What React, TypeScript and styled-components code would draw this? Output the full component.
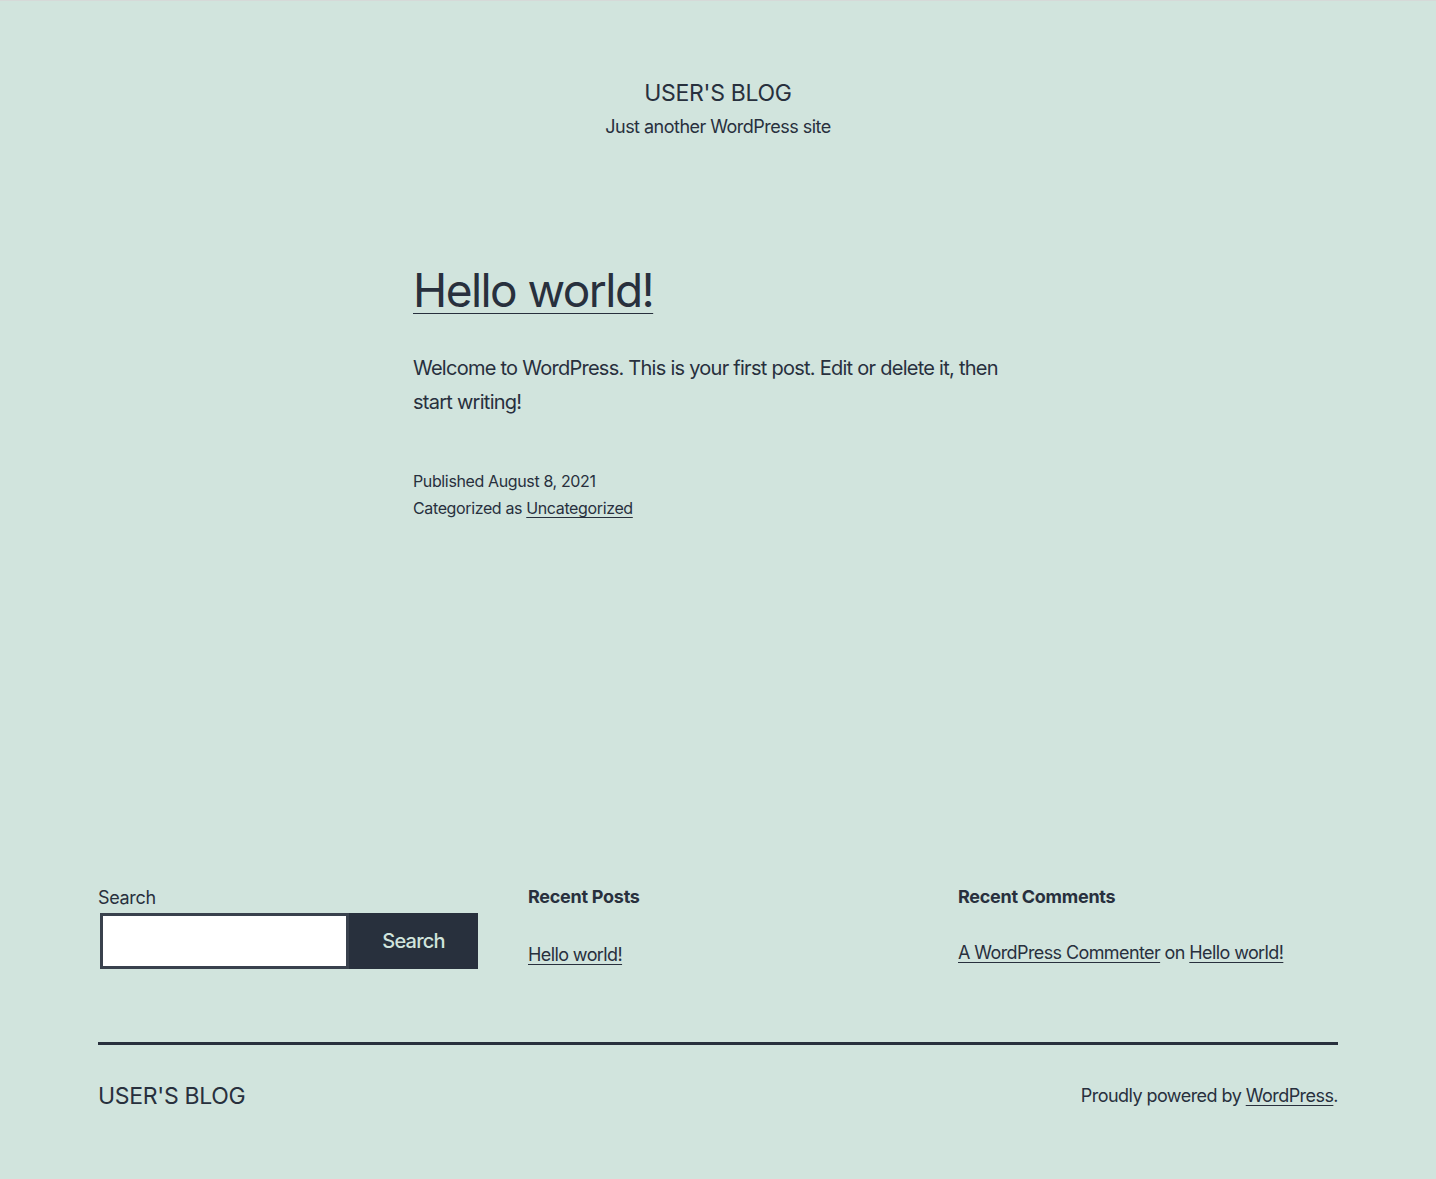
import React from "react";
import styled, { createGlobalStyle } from "styled-components";

const Global = createGlobalStyle`
  html, body { margin: 0; padding: 0; background: #d1e4dd; }
  body {
    font-family: Inter, "Noto Sans", "Liberation Sans", sans-serif;
    color: #28303d;
    -webkit-font-smoothing: antialiased;
  }
  * { box-sizing: border-box; }
`;

const Page = styled.div`
  min-height: 1179px;
  border-top: 1px solid #d6d9d8;
  display: flex;
  flex-direction: column;
`;

const Header = styled.header`
  padding-top: 76px;
  display: flex;
  flex-direction: column;
  align-items: center;
`;

const SiteTitle = styled.p`
  margin: 0;
  font-size: 23px;
  line-height: 33px;
  letter-spacing: -0.3px;
`;

const Tagline = styled.p`
  margin: 0;
  font-size: 18px;
  line-height: 25px;
  letter-spacing: -0.52px;
  margin-top: 4px;
`;

const Main = styled.main`
  width: 610px;
  margin: 0 auto;
  padding-top: 120px;
`;

const EntryTitle = styled.h2`
  margin: 0;
  font-size: 46px;
  font-weight: 400;
  line-height: 62px;
  letter-spacing: -1.55px;
`;

const Link = styled.a<{ $thick?: boolean }>`
  color: #28303d;
  text-decoration: underline;
  text-decoration-thickness: 1px;
  text-underline-offset: ${(p) => (p.$thick ? "6px" : "3px")};
`;

const Content = styled.p`
  margin: 30px 0 0;
  font-size: 20px;
  line-height: 34px;
  letter-spacing: -0.74px;
`;

const Meta = styled.div`
  margin-top: 49px;
  font-size: 16px;
  line-height: 27px;
  letter-spacing: -0.37px;
`;

const MetaLine = styled.div``;

const Widgets = styled.aside`
  width: 1240px;
  margin: 360px auto 0;
  display: grid;
  grid-template-columns: repeat(3, minmax(0, 1fr));
  column-gap: 50px;
`;

const Widget = styled.section`
  display: flex;
  flex-direction: column;
`;

const SearchLabel = styled.label`
  font-size: 18px;
  line-height: 26px;
  letter-spacing: -0.33px;
  margin-top: 3px;
`;

const SearchRow = styled.div`
  display: flex;
  margin-top: 2px;
  margin-left: 2px;
`;

const SearchInput = styled.input`
  flex: 1 1 auto;
  height: 56px;
  border: 3px solid #39414d;
  background: #fff;
  font-size: 18px;
  padding: 0 12px;
  outline: none;
  min-width: 0;
`;

const SearchButton = styled.button`
  flex: 0 0 129px;
  width: 129px;
  height: 56px;
  border: 0;
  padding: 0;
  background: #28303d;
  color: #d1e4dd;
  font-family: inherit;
  font-size: 20px;
  font-weight: 500;
  letter-spacing: -0.8px;
`;

const WidgetTitle = styled.h2`
  margin: 0;
  font-size: 18px;
  font-weight: 700;
  line-height: 26px;
  letter-spacing: -0.27px;
  margin-top: 2px;
`;

const WidgetList = styled.ul<{ $top: number }>`
  list-style: none;
  margin: ${(p) => p.$top}px 0 0;
  padding: 0;
  font-size: 18px;
  line-height: 26px;
  letter-spacing: -0.6px;
`;

const Footer = styled.footer`
  width: 1240px;
  margin: 73px auto 0;
  border-top: 3px solid #28303d;
  display: flex;
  justify-content: space-between;
  align-items: center;
  padding-top: 34px;
`;

const FooterTitle = styled.p`
  margin: 0;
  font-size: 23px;
  line-height: 34px;
  letter-spacing: -0.3px;
`;

const PoweredBy = styled.p`
  margin: 0;
  font-size: 18px;
  line-height: 26px;
  letter-spacing: -0.55px;
`;

export default function App() {
  return (
    <>
      <Global />
      <Page>
        <Header>
          <SiteTitle>USER'S BLOG</SiteTitle>
          <Tagline>Just another WordPress site</Tagline>
        </Header>
        <Main>
          <EntryTitle>
            <Link href="#" $thick>Hello world!</Link>
          </EntryTitle>
          <Content>
            Welcome to WordPress. This is your first post. Edit or delete it, then start writing!
          </Content>
          <Meta>
            <MetaLine>Published August 8, 2021</MetaLine>
            <MetaLine>
              Categorized as <Link href="#">Uncategorized</Link>
            </MetaLine>
          </Meta>
        </Main>
        <Widgets>
          <Widget>
            <SearchLabel htmlFor="s">Search</SearchLabel>
            <SearchRow>
              <SearchInput id="s" type="search" />
              <SearchButton>Search</SearchButton>
            </SearchRow>
          </Widget>
          <Widget>
            <WidgetTitle>Recent Posts</WidgetTitle>
            <WidgetList $top={32}>
              <li><Link href="#">Hello world!</Link></li>
            </WidgetList>
          </Widget>
          <Widget>
            <WidgetTitle>Recent Comments</WidgetTitle>
            <WidgetList $top={30}>
              <li>
                <Link href="#">A WordPress Commenter</Link> on <Link href="#">Hello world!</Link>
              </li>
            </WidgetList>
          </Widget>
        </Widgets>
        <Footer>
          <FooterTitle>USER'S BLOG</FooterTitle>
          <PoweredBy>
            Proudly powered by <Link href="#">WordPress</Link>.
          </PoweredBy>
        </Footer>
      </Page>
    </>
  );
}
